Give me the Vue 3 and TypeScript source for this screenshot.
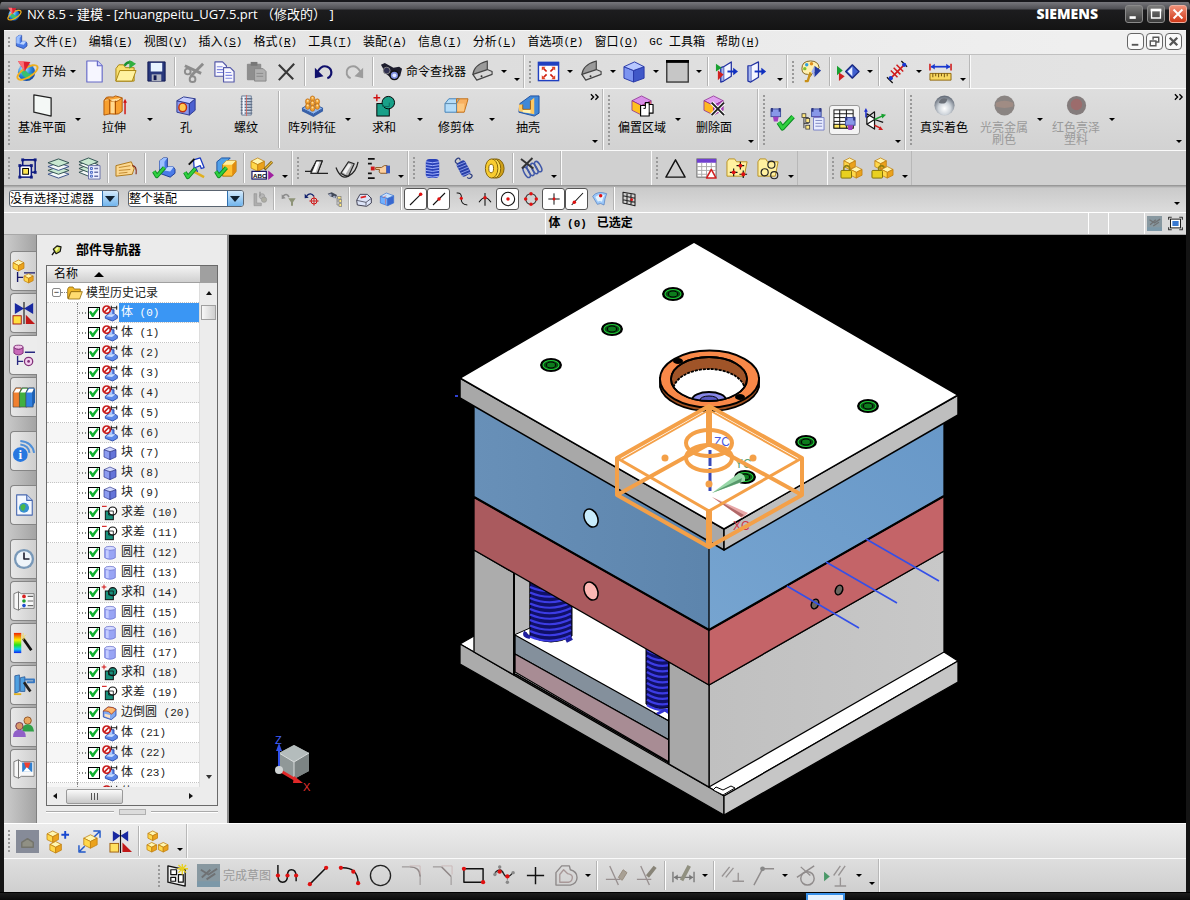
<script setup lang="ts">
import { ref } from 'vue'

type Kind = 'button' | 'sep' | 'arrow' | 'more' | 'space' | 'chevron'
interface Tool { kind: Kind; icon: string; lines: string[]; flags: string }
interface Group { big: boolean; cls: string; tools: Tool[] }

/* ---------- drawing helpers (24 x 24 grid) ---------- */
const dot = (x: number, y: number, r = 2, c = '#e01010') => `<circle cx="${x}" cy="${y}" r="${r}" fill="${c}"/>`
const p = (d: string, s = '#000', w = 1.5, f = 'none') => `<path d="${d}" stroke="${s}" stroke-width="${w}" fill="${f}" stroke-linejoin="round"/>`
const fill = (d: string, f: string) => `<path d="${d}" fill="${f}"/>`
const cube = (x: number, y: number, s: number, t: string, l: string, r: string, st: string) => {
  const h = s / 2
  return p(`M${x} ${y - s}L${x + s} ${y - h}L${x} ${y}L${x - s} ${y - h}Z`, st, 0.8, t)
    + p(`M${x - s} ${y - h}L${x} ${y}V${y + s}L${x - s} ${y + h}Z`, st, 0.8, l)
    + p(`M${x + s} ${y - h}L${x} ${y}V${y + s}L${x + s} ${y + h}Z`, st, 0.8, r)
}
const gold = (x: number, y: number, s: number) => cube(x, y, s, '#fff6b0', '#ffd84a', '#eba21c', '#c08010')
const check = (x: number, y: number) => p(`M${x} ${y}l3 5l8 -9`, '#0a8a20', 4.2) + p(`M${x} ${y}l3 5l8 -9`, '#30d040', 2.4)
const plusAt = (x: number, y: number, c: string, r = 3, w = 1.5) => p(`M${x - r} ${y}h${2 * r}M${x} ${y - r}v${2 * r}`, c, w)
const books = ['#f08030', '#40b040', '#3080e0']
const lBody = (dx: number, dy: number) =>
  `<g transform="translate(${dx} ${dy})">` + p('M4 4l4-3h4v9h6l2 3v4l-5 4l-11-4z', '#1c3c98', 1, '#4a7be8')
  + fill('M4 4l4-3h4l-3 4v9l-5-1z', '#9cc0ff') + fill('M9 14l4-4h6l-4 5z', '#bcd4ff') + '</g>'
const gun = '<rect x="12" y="1" width="10" height="8" fill="#8898e8" stroke="#4050a0"/><path d="M13 0v4M21 0v4" stroke="#303880" stroke-width="2"/>' + fill('M14 9h6l-1 5h-4z', '#a040c0')

const icons: Record<string, string> = {
  nx: '<circle cx="11" cy="13" r="9" fill="url(#globe)"/>' + fill('M5 12q3-4 6 0t6 1l-3 7q-6 0-9-8z', '#38c070')
    + '<ellipse cx="12" cy="13" rx="12" ry="5" fill="none" stroke="#f0b020" stroke-width="2" transform="rotate(-32 12 13)"/>' + fill('M2 1l13 1l-6 10z', '#e02030') + fill('M2 1l6 0l1 11z', '#f87078'),
  part: lBody(1, 1),
  new: p('M4 1h11l5 5v17h-16z', '#6468c8', 1.2, '#f6f6ff') + p('M15 1v5h5', '#6468c8', 1.2, '#d0d4ff'),
  open: p('M2 9l3-4h5l2 3h9v14h-19z', '#a88410', 1, '#f8e070') + p('M2 22l4-11h17l-4 11z', '#a88410', 1, '#fff2a0') + p('M11 6q3-5 8-3', '#1a9030', 2.5) + fill('M16 0l7 4l-7 5z', '#30b040'),
  save: p('M3 2h18v20h-18z', '#101850', 1, '#28387c') + '<rect x="6" y="3" width="12" height="9" fill="#e8f4ff"/><rect x="7" y="15" width="10" height="7" fill="#b0b4c0"/><rect x="9" y="16" width="3" height="5" fill="#101850"/>',
  cut: p('M3 6l17 8M22 4l-13 13', '#8c8c8c', 3) + '<circle cx="6" cy="12" r="3" fill="none" stroke="#8c8c8c" stroke-width="2"/><circle cx="11" cy="20" r="3" fill="none" stroke="#8c8c8c" stroke-width="2"/>',
  copy: p('M2 2h8l4 4v11h-12z', '#5458a8', 1.2, '#f8f8ff') + p('M4 7h6M4 10h8M4 13h8', '#8088e0', 1.2) + p('M11 8h7l4 4v11h-11z', '#5458a8', 1.2, '#f8f8ff') + p('M13 13h6M13 16h7M13 19h7', '#8088e0', 1.2),
  paste: '<rect x="3" y="4" width="15" height="17" rx="1" fill="#8e8e8e"/><rect x="7" y="2" width="7" height="4" fill="#777"/>' + p('M11 9h9l3 3v10h-12z', '#888', 1, '#b0b0b0') + p('M13 14h7M13 17h7', '#8a8a8a', 1),
  del: p('M4 5l15 15M20 4l-16 17', '#383838', 2.2),
  undo: p('M6 12q4-7 10-5q5 2 4 8q-1 3-4 4', '#10106c', 2.2) + fill('M3 8v11l9-2z', '#10106c'),
  redo: p('M18 12q-4-7-10-5q-5 2-4 8q1 3 4 4', '#9c9c9c', 2) + fill('M21 8v11l-9-2z', '#9c9c9c'),
  find: fill('M1 5l4-2l9 5l6-1l3 2l-2 8l-8 3l-7-6z', '#1c1c2c') + '<circle cx="7" cy="11" r="3.5" fill="#303050" stroke="#888"/><circle cx="15" cy="16" r="4.5" fill="#8090e0" stroke="#111" stroke-width="1.5"/><circle cx="15" cy="16" r="2" fill="#e0e8ff"/>',
  clip: p('M2 15q1-10 15-14v14l-11 5z', '#444', 1.2, '#9a9a9a') + p('M2 15l4 6l16-6v-3l-5-2z', '#444', 1.2, '#d8d8d8') + dot(11, 17, 1, '#333'),
  fit: '<rect x="1.5" y="2.5" width="21" height="19" fill="#fff" stroke="#2040c0" stroke-width="1.5"/><rect x="1" y="2" width="22" height="4" fill="#2040c0"/>' + p('M10 12l-3-3M14 12l3-3M10 15l-3 3M14 15l3 3', '#d02010', 1.8) + fill('M5 7h4l-4 4zM19 7h-4l4 4zM5 20h4l-4-4zM19 20h-4l4-4z', '#e04020'),
  shade: p('M1 7l10 4v12l-10-4z', '#2838a8', 1, '#7c94f0') + p('M11 11l11-4v12l-11 4z', '#2838a8', 1, '#4058c8') + p('M1 7l11-5l10 5l-11 4z', '#2838a8', 1, '#b8c8ff'),
  blank: '<rect x="0.8" y="1" width="22.4" height="22" fill="#c6c6c6" stroke="#333" stroke-width="1.4"/><rect x="0" y="0" width="24" height="3" fill="#000"/>',
  wcsA: p('M9 7l8-5v15l-8 5z', '#2030a0', 1.3, '#f4f6ff') + p('M9 7l-3 1v15l3-1', '#2030a0', 1.3, '#a8b8f0') + fill('M1 4l6 4l-6 4z', '#18a030') + fill('M3 11l6 4l-6 6z', '#d02020') + p('M13 12h8', '#1030c0', 2) + fill('M19 8l5 4l-5 4z', '#1030c0'),
  wcsB: p('M5 6l8-4v16l-8 5z', '#2030a0', 1.3, '#f4f6ff') + p('M5 6l-3 0v16l3 1', '#2030a0', 1.3, '#a8b8f0') + p('M9 12h9', '#1030c0', 2) + fill('M16 8l5 4l-5 4z', '#1030c0'),
  palette: p('M2 9q0-8 9-8q8 0 9 7l-4 5q-4 0-5 4l-3-2q-6 0-6-6z', '#806018', 1, '#fff0b0') + dot(7, 5, 1.8, '#30a0e0') + dot(12, 4, 1.8, '#e09020') + dot(5, 9, 1.8, '#80c030') + p('M11 13l-3 9h-3', '#c89018', 2.5) + fill('M15 6l7 5l-7 7z', '#2038a0') + fill('M15 6v12l-3-6z', '#a0b0f0'),
  play: fill('M0 6l6 5l-6 5z', '#18a030') + fill('M2 13l6 4l-6 5z', '#d02020') + p('M9 12l7-7l7 7l-7 7z', '#182880', 1.3, '#4060d0') + fill('M16 7v10l-5-5z', '#e8eeff'),
  snap: p('M4 20l16-16', '#d01818', 1.6) + p('M5 11l7 7M8 8l7 7M11 5l7 7', '#d01818', 1.5) + p('M1 18l6 6M16 1l6 6', '#111', 1.3) + dot(5, 19, 2.2, '#1838d0') + dot(19, 5, 2.2, '#1838d0'),
  measure: p('M1 4v7M23 4v7', '#d01818', 1.6) + p('M2 7h20', '#1838d0', 1.8) + fill('M2 7l4-3v6zM22 7l-4-3v6z', '#1838d0') + p('M1 14h22v7h-22z', '#906810', 1, '#f8d860') + p('M4 14v4M7 14v3M10 14v4M13 14v3M16 14v4M19 14v3', '#705010', 1),
  plane: p('M3 1l18 3v19l-18-4z', '#222', 1.3, '#f4f8f6'),
  extrude: p('M1 7q2-5 6-4t6-1l7 2v14q-4 4-8 3t-11 1z', '#b05808', 1, '#f8a030') + p('M1 7q3-4 7 0t12-3', '#b05808', 1, '#ffe0a0') + p('M7 6v15M13 7v14', '#a04800', 1) + fill('M8 8h4v12h-4z', '#ffd890') + p('M23 21v-13', '#d01010', 1.5) + fill('M21 9h4l-2-4z', '#d01010'),
  hole: p('M2 7l13 3v12l-13-3z', '#2c3890', 1, '#8c98ec') + p('M15 10l6-5v12l-6 5z', '#2c3890', 1, '#4c60d0') + p('M2 7l7-4l12 2l-6 5z', '#2c3890', 1, '#c8d0ff') + '<ellipse cx="8" cy="14" rx="4" ry="4.5" fill="#ffc850" stroke="#c03010" stroke-width="1.5"/>',
  thread: p('M7 2h10v20h-10z', '#708098', 1, '#ccd8e8') + p('M6 5h12M6 8h12M6 11h12M6 14h12M6 17h12M6 20h12', '#607088', 1.4) + p('M12 1v22', '#e06050', 0.8) + fill('M8 3h2v18h-2z', '#f4f8ff'),
  pattern: p('M1 15l10-6l12 6l-10 6z', '#2c58a0', 1, '#90b8f0') + fill('M1 15l12 6v3l-12-6zM23 15l-10 6v3l10-6z', '#3860a8') + [[12, 5], [7, 8], [17, 8], [12, 10], [7, 13], [17, 13], [12, 15]].map(([x, y]) => `<ellipse cx="${x}" cy="${y}" rx="2.4" ry="3" fill="#f0a030" stroke="#b06010" stroke-width="0.6"/><circle cx="${x}" cy="${y - 1}" r="1" fill="#ffe0a0"/>`).join(''),
  unite: '<rect x="4" y="10" width="13" height="13" fill="#18a088" stroke="#000"/><circle cx="16" cy="9" r="6.5" fill="#18a088" stroke="#000"/>' + p('M10 10v3h7v-4', '#0c6c5c', 1) + plusAt(4, 4, '#d01010', 3.5),
  trim: p('M0 10l4-5h10v14h-14z', '#4080b8', 1, '#b4dcf8') + p('M12 5h12l-1 4l-3 10h-8z', '#c07018', 1, '#f8b060') + p('M0 10h12l3-5M12 10v9', '#5a88a8', 1) + fill('M13 10h7v8h-7z', '#fcc880'),
  shell: p('M3 10l11-8h9v18l-5 3l-16-4z', '#2050a0', 1, '#4088d8') + fill('M2 11h4v5h8v-9l4-3v17l-16-3z', '#ffc860') + fill('M6 16l8 0v4l-8-1z', '#fff0b0') + p('M6 11v5h8v-9', '#a06010', 1),
  offset: cube(11, 12, 10, '#d890e8', '#ffc020', '#f07858', '#8c2890') + p('M10 12h5v-3h4v2h4v9h-4v3h-9z', '#000', 1.2, '#fff') + p('M15 12v3h-2M19 11v9', '#000', 1),
  delface: cube(11, 12, 10, '#e0a0f0', '#ffb820', '#b048c0', '#8c2890') + p('M9 9l13 13M22 9l-13 13', '#fff', 4) + p('M9 9l13 13M22 9l-13 13', '#222', 2),
  pvOk: `<g transform="translate(-12 0)">${gun}</g>` + p('M8 15l4 6l11-12', '#0a8a20', 5) + p('M8 15l4 6l11-12', '#30d040', 3),
  pvTree: '<g transform="translate(-2 0)">' + gun + '</g>' + p('M2 7v14M2 10h5M2 16h5', '#333', 1) + '<rect x="0" y="6" width="4" height="4" fill="#ffe880" stroke="#333" stroke-width="0.8"/><rect x="4" y="11" width="4" height="4" fill="#ffe880" stroke="#333" stroke-width="0.8"/><rect x="4" y="18" width="4" height="4" fill="#ffe880" stroke="#333" stroke-width="0.8"/>' + p('M12 10h11v13h-11z', '#7880c8', 1, '#e8ecff') + p('M14 13h7M14 16h7M14 19h7', '#8088c0', 1),
  pvGrid: '<rect x="1" y="2" width="20" height="19" fill="#fff" stroke="#111"/><rect x="1" y="17" width="20" height="4" fill="#ffe860" stroke="#111"/>' + p('M1 6h20M1 10h20M1 14h20M7 2v19M14 2v19', '#111', 1) + `<g transform="translate(1 9)">${gun}</g>`,
  pvAxes: p('M3 6v11l8 5v-11z', '#111', 1.3, '#fff') + p('M3 17l8-5l9 3M11 11v-7l-8 6', '#111', 1.2) + p('M2 10v-8', '#2030d0', 1.5) + fill('M0 4h4l-2-4z', '#2030d0') + p('M11 12l9-4', '#18a030', 1.5) + fill('M18 6l5 1l-4 4z', '#18a030') + p('M11 18l6 3', '#d02020', 1.5) + fill('M15 23l5 0l-3-4z', '#d02020'),
  silver: '<circle cx="12" cy="12" r="10.5" fill="url(#silver)"/>' + fill('M6 9q2-6 9-4q-1 5-4 5t-5-1z', '#6b7078'),
  metal: '<circle cx="12" cy="12" r="10.5" fill="#8a8482"/>' + fill('M3 9q9-4 18 0v4q-9 3-18 0z', '#a08c84'),
  plastic: '<circle cx="12" cy="12" r="10" fill="#847c7c"/><circle cx="12" cy="11" r="6" fill="#9c6c6c"/>',

  sel: p('M7 3h13v13h-13z', '#101c80', 1.6) + '<rect x="4" y="9" width="12" height="12" fill="#fff" stroke="#101c80" stroke-width="1.6"/><rect x="7" y="12" width="6" height="6" fill="#ffe850" stroke="#000"/>' + [[4, 9], [16, 9], [4, 21], [16, 21], [7, 3], [20, 3], [20, 16]].map(([x, y]) => `<rect x="${x - 1.5}" y="${y - 1.5}" width="3" height="3" fill="#101c80"/>`).join(''),
  layers: [18, 14, 10, 6].map((y, i) => p(`M1 ${y}l11-4l11 4l-11 4z`, i % 2 ? '#305050' : '#385088', 1, i % 2 ? '#c8e8d0' : '#f4f8f8')).join(''),
  layset: [16, 12, 8, 5].map((y, i) => p(`M1 ${y}l10-4l10 4l-10 4z`, '#305050', 1, i % 2 ? '#c8e8d0' : '#f4f8f8')).join('') + p('M11 9h12v14h-12z', '#6870a8', 1, '#eef0ff') + p('M17 12h4M17 16h4M17 20h4', '#6870a8') + p('M13 11h2v2h-2zM13 15h2v2h-2zM13 19h2v2h-2z', '#4060c0', 1),
  tag: p('M1 9l16-4l3 7l-2 6l-17 2z', '#b07818', 1, '#fcd890') + p('M4 11l12-2M4 14l12-1M4 17l9-1', '#c08830', 1) + p('M18 9q5 0 4 9', '#802010', 1.2),
  cpyA: lBody(4, 0) + check(2, 15),
  cpyB: p('M11 3l7-2l4 10l-3 1l-1-3l-5 2l2 4l-3 1z', '#1838c0', 1.3, '#fff') + p('M6 8l6-6', '#111', 2) + p('M11 15l11 6', '#e0b020', 2.5) + check(2, 16),
  cpyC: p('M3 5l5-4h9l-4 4v12h-10z', '#1c50a0', 1, '#50a0e8') + p('M9 8l4-4h10v11l-4 5h-10z', '#b07810', 1, '#ffc030') + fill('M9 8l4-4h10l-4 4z', '#fff0a0') + fill('M19 8l4-4v11l-4 5z', '#e08c10') + check(2, 15),
  abc: gold(7, 8, 7) + p('M14 13l8-8', '#806010', 3) + p('M15 12l7-7', '#f0c040', 1.2) + '<rect x="1" y="15" width="15" height="8" fill="#fff" stroke="#101060" stroke-width="1.2"/><text x="2" y="21.5" font-family="Liberation Sans" font-size="6.5" font-weight="700">ABC</text>' + fill('M18 14l6 5l-6 5z', '#a020a0'),
  chA: p('M0 15h6l6-11h6l-5 13h-7M13 17h11', '#222', 1.3) + p('M6 17l6-13h6l-5 13z', '#222', 1.2, '#c8c8c8') + fill('M12 5h3l-4 11h-3z', '#fff'),
  chB: p('M0 11q5 13 13 9t10-15', '#222', 1.3) + p('M5 17l8-12l6 2l-6 13q-4 0-8-3z', '#222', 1.2, '#b0b0b0') + fill('M13 7l3 1l-6 10l-3-2z', '#f0f0f0'),
  hand: p('M1 2h7M1 7h4M1 17h4M1 22h7', '#111', 1.8) + '<rect x="4" y="10" width="4" height="4" fill="#d01818"/>' + p('M9 11h6l3-2h3v8h-7q-2-1-1-4h-4z', '#8c5820', 1, '#fcd0a0') + '<rect x="20" y="9" width="4" height="8" fill="#3858c0"/>',
  spring: '<rect x="5" y="2" width="14" height="20" rx="4" fill="#2840b8"/>' + [5, 8, 11, 14, 17, 20].map(y => p(`M5 ${y}q7 2 14 0`, '#a8b8ff', 1)).join(''),
  springd: '<g transform="rotate(-28 12 12)"><rect x="7" y="4" width="10" height="16" rx="3" fill="#2840a8"/>' + [6, 9, 12, 15, 18].map(y => p(`M7 ${y}l10 1`, '#98a8f0', 0.8)).join('') + p('M9 5q-3-4 1-5t3 3M15 20q3 3 0 4t-4-2', '#304080', 1.3) + '</g>',
  coil: '<ellipse cx="14" cy="12" rx="8" ry="10" fill="#d0a018" stroke="#806008"/><ellipse cx="11.5" cy="12" rx="7" ry="10" fill="#ffe050" stroke="#806008"/><ellipse cx="9" cy="12" rx="6.5" ry="10" fill="#f8cc30" stroke="#806008"/><ellipse cx="8.5" cy="12" rx="2.5" ry="4.5" fill="#fff" stroke="#806008"/>',
  springx: [0, 1, 2, 3].map(i => `<ellipse cx="${7 + i * 4}" cy="${16 - i * 2}" rx="2.5" ry="6" fill="none" stroke="#4058a8" stroke-width="1.6" transform="rotate(-30 ${7 + i * 4} ${16 - i * 2})"/>`).join('') + p('M1 2l13 10M13 1l-11 11', '#333', 2),
  tri: p('M12 3l10 18h-20z', '#111', 1.5),
  tabtri: '<rect x="2" y="2" width="20" height="19" fill="#fff" stroke="#666"/><rect x="2" y="2" width="20" height="4" fill="#7040d0"/>' + p('M2 10h20M2 14h20M2 18h20M7 6v15M12 6v15M17 6v15', '#aaa', 1) + p('M17 13l5 9h-10z', '#d02020', 1.6, '#fff'),
  foldpts: p('M1 5l2-3h6l2 3h11l-3 15h-18z', '#b89020', 1, '#fff0a0') + plusAt(8, 16, '#111', 4, 1.2) + plusAt(15, 9, '#111', 4, 1.2) + plusAt(18, 18, '#111', 4, 1.2) + dot(8, 16) + dot(15, 9) + dot(18, 18),
  foldcirc: p('M1 5l2-3h6l2 3h11l-3 15h-18z', '#b89020', 1, '#fff0a0') + [[8, 16], [15, 8], [18, 19]].map(([x, y]) => `<circle cx="${x}" cy="${y}" r="3.7" fill="none" stroke="#222" stroke-width="1.2"/>`).join(''),
  lockA: gold(10, 7, 6) + gold(17, 16, 6) + '<path d="M4 14v-3q3-4 6 0v3" fill="none" stroke="#908010" stroke-width="1.6"/><rect x="1" y="14" width="11" height="8" rx="1" fill="#e8d020" stroke="#807008"/>',
  lockB: gold(10, 7, 6) + gold(17, 16, 6) + '<path d="M8 14v-3q3-4 6 0" fill="none" stroke="#908010" stroke-width="1.6"/><rect x="1" y="14" width="11" height="8" rx="1" fill="#e8d020" stroke="#807008"/>',

  sBulb: '<g opacity="0.65">' + p('M3 4h4v14h7v4h-11z', '#777', 1, '#999') + '<circle cx="15" cy="8" r="4" fill="#aaa" stroke="#777"/><circle cx="18" cy="13" r="4" fill="#9a9a8a" stroke="#777"/>' + p('M12 1v7', '#777', 2) + '</g>',
  sFil: p('M3 8q5-6 9 1', '#8c8c8c', 2.5) + fill('M1 5v7l6-1z', '#8c8c8c') + fill('M11 11h11l-4 6v5h-3v-5z', '#8e9478'),
  sUndo: p('M4 7q6-6 11 1', '#10206c', 2) + fill('M1 4v7l6-1z', '#10206c') + '<circle cx="15" cy="15" r="4.5" fill="none" stroke="#d01010" stroke-width="1.5"/>' + plusAt(15, 15, '#d01010', 7, 1.3),
  sTree: fill('M1 4l6-2l8 4l-2 5l-8-3z', '#404858') + dot(5, 6, 2, '#a0a8c0') + dot(11, 9, 2, '#a0a8c0') + p('M15 10v11h4M15 15h4', '#777', 1) + '<rect x="16" y="8" width="5" height="4" fill="#ffe880" stroke="#777"/><rect x="18" y="13" width="4" height="4" fill="#ffe880" stroke="#777"/><rect x="18" y="19" width="4" height="4" fill="#ffe880" stroke="#777"/>',
  sBox: p('M1 14l5-9h11l6 6v7l-7 5l-14-2z', '#445', 1.5, '#dce4f8') + p('M1 14l14 3l8-6M15 17v5', '#445', 1.2) + p('M7 10l8-2', '#e02020', 2.5),
  sCube: p('M2 8l11 3v11l-11-4z', '#3870d0', 1, '#70b0ff') + p('M13 11l9-4v11l-9 4z', '#3870d0', 1, '#3868d0') + p('M2 8l9-5l11 4l-9 4z', '#3870d0', 1, '#c8e4ff') + p('M10 12v8M6 10l5-3', '#e06060', 1),
  sEnd: p('M3 21l16-16', '#111', 1.6) + dot(19, 5, 2.6),
  sMid: p('M3 21l18-18', '#111', 1.6) + dot(12, 12, 2.6),
  sCurve: p('M4 3q8-1 7 8t9 10', '#111', 1.6) + dot(11, 11, 2.4),
  sCross: p('M3 17q9-14 18 0M12 3v19', '#111', 1.6) + dot(12, 10, 2.6),
  sCirc: '<circle cx="12" cy="12" r="10" fill="none" stroke="#111" stroke-width="1.6"/>' + dot(12, 12, 2.6),
  sQuad: '<circle cx="12" cy="12" r="8" fill="none" stroke="#333" stroke-width="1.6"/>' + dot(12, 4, 2.6) + dot(12, 20, 2.6) + dot(4, 12, 2.6) + dot(20, 12, 2.6),
  sPlus: plusAt(12, 12, '#111', 8.5) + dot(12, 12, 2.2),
  sOn: p('M4 21l17-18', '#111', 1.6) + dot(8, 17, 2.6),
  sSurf: p('M1 8q7-9 21-4q-3 7-4 17q-5-4-10-1z', '#4878c0', 1, '#9cc8f8') + fill('M5 9q6-5 14-3q-3 4-4 10q-4-2-6 0z', '#e4f4ff') + dot(13, 7, 2.6),
  sGrid: p('M3 2l18 3v17l-18-4zM3 7l18 4M3 13l18 4M9 3v17M15 4v17', '#222', 1.6) + dot(16, 13, 2),
  dim: '<rect x="0" y="0" width="24" height="24" fill="#8898a0"/>' + p('M4 6l8 5l9-6M5 14l9-8M10 16l9-6', '#6f7274', 2) + fill('M0 18h24v6h-24z', '#7c98a8'),
  dimAsm: '<rect x="0" y="0" width="24" height="24" fill="#868b98"/>' + p('M6 18v-5l6-4l6 4v5z', '#74746c', 1.5, '#909084'),
  screen: '<rect x="4" y="5" width="16" height="14" fill="#fff" stroke="#111" stroke-width="1.5"/><rect x="7" y="8" width="10" height="8" fill="#3878d0"/>' + p('M1 6v-4h5M18 2h5v4M23 18v4h-5M6 22h-5v-4', '#333', 1.8),

  tAsm: gold(6, 6, 6) + p('M5 13v11M5 19h6M12 14h12', '#181868', 1.5) + gold(17, 20, 5),
  tCon: fill('M2 1l10 6l-10 6zM22 1l-10 6l10 6z', '#1828a0') + p('M12 0v24', '#111', 1.2) + '<rect x="0" y="15" width="9" height="9" fill="#ffe040" stroke="#a01010"/>' + fill('M14 14v10h10z', '#c01818'),
  tPart: '<ellipse cx="6" cy="3.5" rx="5" ry="2.2" fill="#f0c0e8" stroke="#803078"/>' + p('M1 4v6q5 4 10 0v-6q-5 4-10 0z', '#803078', 1, '#c868b8') + p('M5 13v10M5 19h6M13 9h11', '#282880', 1.5) + '<circle cx="17" cy="19" r="4.5" fill="#f4d0f0" stroke="#803078" stroke-width="1.4"/><circle cx="17" cy="19" r="1.5" fill="#803078"/>',
  tBooks: books.map((c, i) => p(`M${i * 7} 7l3-5h6l-1 5v16h-8z`, '#444', 0.7, c) + fill(`M${i * 7 + 1} 7l2.5-4h5l-1.5 4z`, '#fff')).join('') + fill('M21 7l3-5v16l-3 5z', '#2060b0'),
  tInfo: '<circle cx="8" cy="16" r="8" fill="#2878e0"/>' + '<text x="8" y="21" font-family="Liberation Serif" font-size="14" font-weight="700" fill="#fff" text-anchor="middle">i</text>' + p('M8 5q9 1 10 9M8 1q13 1 15 13', '#5090d8', 2.2),
  tWeb: p('M4 1h11l6 6v16h-17z', '#4868b0', 1.2, '#f4f8ff') + p('M15 1v6h6', '#4868b0', 1.2, '#c8d8f8') + '<circle cx="12" cy="15" r="5.5" fill="#3890d0"/>' + fill('M8 13q4-4 6 0l-2 5q-4 1-4-5z', '#48b848'),
  tClock: '<circle cx="12" cy="12" r="11" fill="#7898b8"/><circle cx="12" cy="12" r="8.5" fill="#eef4fa"/>' + p('M12 5v7h6', '#223', 1.8),
  tRoles: p('M1 4l5-2v20l-5-2zM6 2l3 2h14v16h-14l-3 2z', '#777', 1, '#f8f8f8') + dot(12, 7, 2, '#d82020') + dot(12, 12, 2, '#20a030') + dot(12, 17, 2, '#2050d0') + p('M16 7h6M16 12h6M16 17h6', '#666', 1.2),
  tRain: '<rect x="1" y="1" width="8" height="22" fill="url(#rainbow)"/>' + p('M11 7l9 13', '#111', 3) + p('M9 3l5 5M14 3l-5 5M11 1v8', '#f0d860', 1),
  tMold: p('M2 2l5-1v18l-5 2zM8 4l5-1v16h-5z', '#205090', 0.8, '#50a0e0') + p('M12 6h11v3h-8', '#3878c0', 2) + p('M12 9l7 10', '#222', 3) + p('M1 22h8', '#e0b020', 2),
  tUsers: '<circle cx="16" cy="5" r="4" fill="#e8a860" stroke="#905020"/>' + fill('M10 17q0-8 6-8t7 8z', '#30a048') + '<circle cx="7" cy="11" r="4" fill="#d89868" stroke="#703050"/>' + fill('M0 23q0-8 7-8t7 8z', '#9060c8'),
  tSys: p('M1 4l5-2v20l-5-2zM6 2l3 2h14v16h-14l-3 2z', '#777', 1, '#f8f8f8') + '<rect x="10" y="5" width="11" height="10" fill="#3080d0"/>' + fill('M12 5h7l-2 6h-3z', '#f04030') + fill('M11 15l4-5l5 5z', '#fff'),

  body: p('M5 17l5-4v-6h8v6l5 3v4l-7 4l-11-4z', '#2444a8', 1.3, '#5c88e8') + fill('M6 17l5-3h9l-5 4z', '#c8dcff') + fill('M11 8h4v6h-4z', '#a8c8ff') + p('M13 4h10M14 1v6M22 1v6', '#222', 1.6) + '<circle cx="7" cy="7" r="5.5" fill="#fff" stroke="#c81c1c" stroke-width="2.6"/>' + p('M3 11l8-8', '#c81c1c', 2.6),
  block: p('M3 7l9 3v12l-9-4z', '#2c3488', 1, '#8c9cf0') + p('M12 10l9-3v11l-9 4z', '#2c3488', 1, '#6474d8') + p('M3 7l9-4l9 4l-9 3z', '#2c3488', 1, '#d0d8ff'),
  cyl: p('M4 5v14q8 5 16 0v-14z', '#6068c8', 1, '#98a4f4') + '<ellipse cx="12" cy="5" rx="8" ry="3" fill="#d4daff" stroke="#6068c8"/>' + fill('M6 8h4v12l-4-1z', '#c4ccff'),
  sub: '<rect x="5" y="9" width="12" height="13" fill="#18907c" stroke="#111" stroke-width="1.5"/><circle cx="16" cy="9" r="6" fill="#fff" stroke="#111" stroke-width="1.8"/>' + p('M10 9h7v6h-7z', '#111', 1.2) + p('M0 2h7', '#d01010', 1.6),
  uni: '<rect x="5" y="9" width="12" height="13" fill="#18907c" stroke="#111" stroke-width="1.5"/><circle cx="16" cy="10" r="6" fill="#18907c" stroke="#111" stroke-width="1.8"/>' + p('M10 9h7v6h-7z', '#111', 1.2) + plusAt(3, 3, '#d01010', 3.5),
  blend: p('M2 9l7-6q8 0 12 3v10l-7 6l-12-4z', '#2444a8', 1.2, '#80a8f0') + p('M2 9q9-1 12 5l7-7q-3-4-12-4z', '#b04010', 1.2, '#ffb870') + fill('M4 13l8 2v5l-8-3z', '#ffe0c0'),
  folder: p('M1 6l2-3h6l2 3h9v4h-14l-4 10h-1z', '#906808', 1.2, '#f0b828') + p('M2 21l4-11h17l-4 11z', '#906808', 1.2, '#ffdc70'),
  pin: p('M2 22l6-8', '#111', 3) + p('M5 9l8-7l9 2l-2 10l-9 5z', '#111', 2.5, '#c8d040') + fill('M9 9l5-4l3 1l-6 8z', '#f8ffb0'),

  add: gold(6, 7, 6) + gold(9, 18, 6) + plusAt(19, 5, '#1848d0', 4, 2),
  move: gold(13, 12, 7) + p('M1 16v7h7M2 22l5-5M23 8v-7h-7M22 2l-5 5', '#2058c8', 1.5),
  mirror: fill('M4 1l8 5l-8 6zM20 1l-8 5l8 6z', '#1828a0') + p('M12 0v24', '#111', 1.2) + '<rect x="1" y="14" width="9" height="9" fill="#ffe060" stroke="#a06010"/>' + fill('M14 13v10h10z', '#c01818'),
  pat: gold(7, 6, 5) + gold(6, 18, 5) + gold(18, 18, 5),
  sk: p('M2 2l18 4v17l-18-4z', '#111', 1.4, '#eee') + p('M5 6h6v5h-6zM5 14h5v4h-5zM13 11h5v8h-5z', '#111', 1.3, '#fff') + p('M17 0v11M12 5h11M13 1l8 8M21 1l-8 8', '#e8d020', 1.4),
  profile: p('M2 1v11q0 7 5 7q5 0 5-7q0-6 4-6q5 0 5 7v5', '#111', 1.5) + dot(2, 12, 2.2) + dot(12, 12, 2.2) + dot(21, 12, 2.2),
  line: p('M3 21l17-17', '#111', 1.5) + dot(3, 21, 2.2) + dot(20, 4, 2.2),
  arc: p('M3 4q18-1 18 16', '#111', 1.5) + dot(3, 4, 2.2) + dot(16, 8, 2.2) + dot(21, 20, 2.2),
  circle: '<circle cx="12" cy="12" r="10.5" fill="none" stroke="#222" stroke-width="1.4"/>',
  fillet: p('M2 3h8M21 12v10', '#a09c9c', 1.2) + p('M10 3q11 0 11 10', '#908888', 1.5) + p('M10 2h11v9', '#c8b0b0', 0.8),
  chamfer: p('M2 3h9M21 13v9', '#a09c9c', 1.2) + p('M11 3l10 10', '#908888', 1.5) + p('M11 2h11v9', '#c8b0b0', 0.8),
  rect: p('M2 5h20v14h-20z', '#111', 1.5) + dot(2, 5, 2.2) + dot(22, 19, 2.2),
  spline: p('M2 9q6-6 9 1t10-1', '#222', 1.4) + p('M7 2v6l-5 2M15 17l0-4', '#888', 1) + dot(7, 3, 1.8, '#888') + dot(2, 11, 1.8, '#888') + dot(21, 9, 1.8, '#888') + dot(15, 19, 1.8, '#888') + dot(7, 8, 2.2) + dot(15, 13, 2.2),
  plus: plusAt(12, 12, '#111', 9),
  offc: p('M1 22v-13l6-7h8l1 4q7 2 7 8t-7 8z', '#8c8888', 1.4) + p('M5 19v-8l4-5l4 4q6 1 5 5t-4 4z', '#a89898', 1.4),
  trimA: p('M2 16h15M6 2l9 20', '#989090', 1.4) + p('M15 14l5-8l4 3l-5 8z', '#988c80', 1, '#a8a094'),
  trimB: p('M2 16h15M6 2l9 20', '#989090', 1.4) + p('M13 13l8-10', '#888478', 4),
  dimn: p('M1 8v11M23 8v11M2 14h20', '#777', 1.4) + fill('M2 14l4-3v6zM22 14l-4-3v6z', '#777') + p('M10 17l8-15', '#909080', 4),
  conA: p('M1 13l8-10M5 14l8-10M12 18h12M18 9v9', '#989494', 1.4),
  conB: p('M2 22l9-17h12', '#908c8c', 1.5) + dot(11, 5, 2.5, '#888'),
  tang: '<circle cx="13" cy="15" r="7" fill="none" stroke="#908c8c" stroke-width="1.5"/>' + p('M2 14l18-12', '#908c8c', 1.5) + p('M6 3l10 9', '#908c8c', 1.3),
  auto: fill('M-2 8l6 5l-6 5z', '#4a9868') + p('M8 12l7-10M13 12l7-10M9 23h12M15 14v9', '#989494', 1.4),
}

/* "|" separator, "v" drop arrow, "+" overflow arrow, "_" spacer, ">>" chevron,
   "icon=label/second line", "!" greyed out, "*" pressed */
const parse = (spec: string): Tool[] => spec.split(' ').map((t) => {
  const kinds: Record<string, Kind> = { '|': 'sep', v: 'arrow', '+': 'more', _: 'space', '>>': 'chevron' }
  if (kinds[t]) return { kind: kinds[t], icon: '', lines: [], flags: '' }
  const flags = (t.includes('!') ? 'off ' : '') + (t.includes('*') ? 'pressed' : '')
  const [icon, label] = t.replace(/[!*]/g, '').split('=')
  return { kind: 'button', icon, lines: label ? label.split('/') : [], flags }
})
const g = (spec: string, cls = '', big = false): Group => ({ big, cls, tools: parse(spec) })

const topBars: { cls: string; groups: Group[] }[] = [
  { cls: 'row-a', groups: [
    g('nx=开始 v new open save | cut copy paste del | undo redo | find=命令查找器 clip v +'),
    g('fit v clip v shade v blank v | wcsA wcsB +'),
    g('palette | play v | snap v measure +'),
  ] },
  { cls: 'row-b', groups: [
    g('plane=基准平面 v extrude=拉伸 v hole=孔 thread=螺纹 | pattern=阵列特征 v unite=求和 v trim=修剪体 v shell=抽壳 _ >>', 'wide', true),
    g('offset=偏置区域 v delface=删除面 +', '', true),
    g('pvOk pvTree pvGrid* pvAxes +', '', false),
    g('silver=真实着色 metal=光亮金属/刷色! v plastic=红色亮泽/塑料! v _ >>', 'rest', true),
  ] },
  { cls: 'row-c', groups: [
    g('sel layers layset | tag | cpyA cpyB cpyC | abc +'),
    g('chA chB hand +'),
    g('spring springd coil | springx +'),
    g('tri tabtri foldpts foldcirc +', 'far'),
    g('lockA lockB +', 'near'),
  ] },
]
const bottomBars: { cls: string; groups: Group[] }[] = [
  { cls: 'row-d', groups: [g('dimAsm add move mirror | pat +')] },
  { cls: 'row-e', groups: [g('sk dim=完成草图! profile line arc circle fillet chamfer rect spline plus offc v | trimA trimB | dimn v | conA conB v tang auto v +')] },
]
const snaps = parse('sBulb | sFil sUndo sTree | sBox sCube | sEnd* sMid* sCurve sCross sCirc* sQuad sPlus* sOn* sSurf | sGrid')

const menus: [string, string][] = [
  ['文件', 'F'], ['编辑', 'E'], ['视图', 'V'], ['插入', 'S'], ['格式', 'R'], ['工具', 'T'], ['装配', 'A'],
  ['信息', 'I'], ['分析', 'L'], ['首选项', 'P'], ['窗口', 'O'],
]
const tabs = ['tAsm', 'tCon', 'tPart', 'tBooks', 'tInfo', 'tWeb', 'tClock', 'tRoles', 'tRain', 'tMold', 'tUsers', 'tSys']
const tabNames = ['装配导航器', '约束导航器', '部件导航器', '重用库', '信息', '网页', '历史记录', '系统材料', '颜色', '模具', '角色', '场景']

const kindOf = (n: number): [string, string] => {
  if (n <= 6 || n > 20) return ['body', '体']
  if (n <= 9) return ['block', '块']
  if ([10, 11, 19].includes(n)) return ['sub', '求差']
  if ([14, 18].includes(n)) return ['uni', '求和']
  if (n === 20) return ['blend', '边倒圆']
  return ['cyl', '圆柱']
}
const features = ref(Array.from({ length: 25 }, (_, n) => ({ n, icon: kindOf(n)[0], name: kindOf(n)[1], on: true })))
const selected = ref(0)
const activeTab = ref(2)
const filter = ref('没有选择过滤器')
const scope = ref('整个装配')

const screws = [[673, 294], [612, 329], [551, 365], [868, 406], [806, 442], [745, 477]]
const coilsA = Array.from({ length: 12 }, (_, i) => 576 + i * 5.5)
const coilsB = Array.from({ length: 11 }, (_, i) => 650 + i * 5.5)
</script>

<template>
  <div class="window">
    <svg class="defs" aria-hidden="true">
      <defs>
        <radialGradient id="globe" cx=".35" cy=".3" r=".8"><stop offset="0" stop-color="#c8f0ff" /><stop offset=".5" stop-color="#2888e0" /><stop offset="1" stop-color="#103890" /></radialGradient>
        <radialGradient id="silver" cx=".5" cy=".65" r=".6"><stop offset="0" stop-color="#ffffff" /><stop offset=".5" stop-color="#d0d6dc" /><stop offset="1" stop-color="#68707c" /></radialGradient>
        <linearGradient id="rainbow" x1="0" y1="0" x2="0" y2="1"><stop offset="0" stop-color="#f02000" /><stop offset=".35" stop-color="#f8f000" /><stop offset=".6" stop-color="#20e020" /><stop offset=".8" stop-color="#10d0f0" /><stop offset="1" stop-color="#1020f0" /></linearGradient>
      </defs>
    </svg>

    <header class="title">
      <svg class="ic-title" viewBox="0 0 24 24" aria-hidden="true" v-html="icons.nx" />
      <h1>NX 8.5 - 建模 - [zhuangpeitu_UG7.5.prt （修改的） ]</h1>
      <span class="brand">SIEMENS</span>
      <div class="win-btns">
        <button type="button" class="wb" aria-label="最小化"><svg viewBox="0 0 18 18"><path d="M4 13h7" stroke="#fff" stroke-width="3" /></svg></button>
        <button type="button" class="wb" aria-label="最大化"><svg viewBox="0 0 18 18"><path d="M4 4.5h10v9h-10z" fill="none" stroke="#fff" stroke-width="1.5" /><path d="M3 4.5h12" stroke="#fff" stroke-width="3" /></svg></button>
        <button type="button" class="wb close" aria-label="关闭"><svg viewBox="0 0 18 18"><path d="M4 4l10 10M14 4l-10 10" stroke="#fff" stroke-width="2.2" /></svg></button>
      </div>
    </header>

    <div class="frame">
      <nav class="menubar">
        <i class="grip" />
        <svg class="ic-menu" viewBox="0 0 24 24" aria-hidden="true" v-html="icons.part" />
        <button v-for="m in menus" :key="m[0]" type="button">{{ m[0] }}<span class="lat">(<u>{{ m[1] }}</u>)</span></button>
        <button type="button"><span class="lat">GC&nbsp;</span>工具箱</button>
        <button type="button">帮助<span class="lat">(<u>H</u>)</span></button>
        <div class="doc-btns">
          <button type="button" aria-label="最小化文档"><svg viewBox="0 0 16 16"><path d="M4 11.5h7" stroke="#555" stroke-width="2" /></svg></button>
          <button type="button" aria-label="还原文档"><svg viewBox="0 0 16 16"><path d="M6.5 6v-2.5h6v5h-2.500M3.5 7.5h6v5h-6z" fill="none" stroke="#555" stroke-width="1.5" /></svg></button>
          <button type="button" aria-label="关闭文档"><svg viewBox="0 0 16 16"><path d="M4 4l8 8M12 4l-8 8" stroke="#555" stroke-width="2.5" /></svg></button>
        </div>
      </nav>

      <div v-for="bar in topBars" :key="bar.cls" class="bar" :class="bar.cls">
        <div v-for="(gr, gi) in bar.groups" :key="gi" class="group" :class="[gr.cls, { big: gr.big }]">
          <i class="grip" />
          <template v-for="(t, i) in gr.tools" :key="i">
            <button v-if="t.kind === 'button'" type="button" class="tool" :class="[t.flags, { labelled: t.lines.length }]" :aria-label="t.lines.join('') || t.icon">
              <svg viewBox="0 0 24 24" aria-hidden="true" v-html="icons[t.icon]" />
              <span v-if="t.lines.length" class="cap"><span v-for="l in t.lines" :key="l">{{ l }}</span></span>
            </button>
            <i v-else-if="t.kind === 'sep'" class="sep" />
            <button v-else-if="t.kind === 'arrow'" type="button" class="arrow" aria-label="更多" />
            <button v-else-if="t.kind === 'more'" type="button" class="arrow more" aria-label="工具条选项" />
            <i v-else-if="t.kind === 'space'" class="space" />
            <span v-else class="ends">
              <svg viewBox="0 0 10 8" aria-hidden="true"><path d="M1 1l3 3l-3 3M6 1l3 3l-3 3" fill="none" stroke="#000" stroke-width="1.5" /></svg>
              <button type="button" class="arrow more" aria-label="工具条选项" />
            </span>
          </template>
        </div>
      </div>

      <div class="selbar">
        <span class="combo first"><select v-model="filter" aria-label="选择过滤器"><option>没有选择过滤器</option></select></span>
        <span class="combo second"><select v-model="scope" aria-label="选择范围"><option>整个装配</option></select></span>
        <template v-for="(t, i) in snaps" :key="i">
          <i v-if="t.kind === 'sep'" class="sep" />
          <button v-else type="button" class="snap" :class="t.flags" :aria-label="t.icon"><svg viewBox="0 0 24 24" aria-hidden="true" v-html="icons[t.icon]" /></button>
        </template>
        <i class="space" />
        <button type="button" class="arrow more" aria-label="工具条选项" />
      </div>

      <div class="status">
        <p class="cue" />
        <p class="msg">体<span class="lat"> (0) </span> 已选定</p>
        <i class="cell c1" /><i class="cell c2" />
        <div class="cell icons">
          <svg viewBox="0 0 24 24" aria-hidden="true" v-html="icons.dim" />
          <svg viewBox="0 0 24 24" aria-hidden="true" v-html="icons.screen" />
        </div>
      </div>

      <main class="work">
        <aside class="resource">
          <button v-for="(t, i) in tabs" :key="t" type="button" class="tab" :class="{ active: i === activeTab, gap: i >= 4 && i <= 6 }" :aria-label="tabNames[i]" @click="activeTab = i">
            <svg viewBox="0 0 24 24" aria-hidden="true" v-html="icons[t]" />
          </button>
        </aside>

        <section class="nav">
          <h2><svg viewBox="0 0 24 24" aria-hidden="true" v-html="icons.pin" />部件导航器</h2>
          <div class="tree">
            <div class="thead"><button type="button">名称<b class="up" /></button><i class="stub" /></div>
            <div class="tbody">
              <ul>
                <li class="root">
                  <button type="button" class="exp" aria-label="折叠">−</button><i class="dots" />
                  <svg viewBox="0 0 24 24" aria-hidden="true" v-html="icons.folder" /><span>模型历史记录</span>
                </li>
                <li v-for="f in features" :key="f.n" :class="{ sel: f.n === selected }" @click="selected = f.n">
                  <i class="branch" />
                  <input :id="'f' + f.n" v-model="f.on" type="checkbox">
                  <svg viewBox="0 0 24 24" aria-hidden="true" v-html="icons[f.icon]" />
                  <label :for="'f' + f.n">{{ f.name }}<span class="lat"> ({{ f.n }})</span></label>
                </li>
              </ul>
              <div class="vscroll"><i class="tri t-up" /><i class="thumb" /><i class="space" /><i class="tri t-down" /></div>
            </div>
            <div class="hscroll"><i class="tri t-left" /><i class="thumb"><i /><i /><i /></i><i class="space" /><i class="tri t-right" /></div>
          </div>
          <div class="splitter"><i /><b /><i /></div>
        </section>

        <section class="view">
          <svg viewBox="229 235 957 588" role="img" aria-label="模架装配">
            <defs>
              <linearGradient id="bl" x1="0" y1="0" x2="1" y2="0"><stop offset="0" stop-color="#6890b8" /><stop offset="1" stop-color="#5c84ac" /></linearGradient>
              <linearGradient id="br" x1="0" y1="1" x2="1" y2="0"><stop offset="0" stop-color="#76a4d0" /><stop offset="1" stop-color="#6898c8" /></linearGradient>
              <linearGradient id="gr" x1="0" y1="0" x2="1" y2="0"><stop offset="0" stop-color="#c0c0c0" /><stop offset="1" stop-color="#c8c8c8" /></linearGradient>
              <clipPath id="win"><path d="M514 573L669 662V764L514 674Z" /></clipPath>
              <clipPath id="bore"><ellipse cx="709" cy="379" rx="37" ry="22" /></clipPath>
            </defs>
            <g stroke="#000" stroke-width="1.3" stroke-linejoin="round">
              <path d="M460 644L474 636V500H944V652L958 661L724 796Z" fill="#fff" />
              <path d="M460 644L724 796V815L460 664Z" fill="#ababab" />
              <path d="M724 796L958 661V682L724 815Z" fill="#c6c6c6" />
              <path d="M474 550L514 573V675L474 652Z" fill="#acacac" />
              <path d="M709 685L944 551V652L709 787Z" fill="url(#gr)" />
            </g>
            <g clip-path="url(#win)">
              <path d="M514 573L669 662V764L514 674Z" fill="#fff" />
              <path d="M514 570H530V628L514 635Z" fill="#b8b8b8" stroke="#000" />
              <path d="M515 635L669 721V740L515 654Z" fill="#84909c" stroke="#000" stroke-width="1.3" />
              <path d="M515 654L669 740V762L515 672Z" fill="#a88c94" stroke="#000" stroke-width="1.3" />
              <g fill="#101068" stroke="#000">
                <path d="M530 575V636q21 12 42 0V575Z" />
                <path d="M646 640V704q12 8 26 2V640Z" />
              </g>
              <g fill="none" stroke="#3c3ce4" stroke-width="2.2">
                <path v-for="y in coilsA" :key="y" :d="`M530 ${y}q21 9 41 -1`" />
                <path v-for="y in coilsB" :key="y" :d="`M647 ${y}q12 8 26 3`" />
              </g>
              <path d="M526 632q-3 4 4 5M566 641l6-3" stroke="#2020a0" stroke-width="4" />
              <path d="M657 714l8-4l6 4" stroke="#3030d0" stroke-width="3" fill="none" />
              <path d="M654 713l15 8" stroke="#000" />
            </g>
            <path d="M514 573V675M669 662V764M515 674L669 763" fill="none" stroke="#000" stroke-width="2" />
            <g stroke="#000" stroke-width="1.3" stroke-linejoin="round">
              <path d="M669 662L709 685V787L669 764Z" fill="#a8a8a8" />
              <path d="M474 497L709 630V685L474 550Z" fill="#aa5a5e" />
              <path d="M709 630L944 496V551L709 685Z" fill="#c46468" />
              <path d="M474 404L724 540L709 630L474 497Z" fill="url(#bl)" />
              <path d="M709 540L944 420V496L709 630Z" fill="url(#br)" />
            </g>
            <path d="M474 497L709 630L944 496" fill="none" stroke="#000" stroke-width="2.2" />
            <g stroke="#000" stroke-width="1.5" stroke-linejoin="round">
              <path d="M460 378L724 529V550L460 398Z" fill="#a8a8a8" />
              <path d="M724 529L958 395V415L724 550Z" fill="#bebebe" />
              <path d="M694 242L958 395L724 529L460 378Z" fill="#fff" />
            </g>
            <path d="M713 790l10 5l12-7l-4-2l-8 4l-7-3z" fill="#fff" stroke="#000" />
            <path d="M455 396h3" stroke="#3040d0" stroke-width="2" />

            <g v-for="s in screws" :key="s[0]">
              <ellipse :cx="s[0]" :cy="s[1]" rx="11" ry="7" fill="#000" />
              <ellipse :cx="s[0]" :cy="s[1]" rx="8" ry="4.5" fill="#0a4c14" stroke="#20c838" stroke-width="1.2" />
              <ellipse :cx="s[0]" :cy="s[1]" rx="4.5" ry="3" fill="#0c7c1c" stroke="#000" />
            </g>

            <g stroke="#000" stroke-width="1.5">
              <ellipse cx="591" cy="518" rx="6.5" ry="9.5" fill="#c8ecfc" transform="rotate(-24 591 518)" />
              <ellipse cx="591" cy="591" rx="6.5" ry="9.5" fill="#fcb8b4" transform="rotate(-24 591 591)" />
              <ellipse cx="815" cy="604" rx="3.5" ry="5" fill="#6c6660" transform="rotate(22 815 604)" />
              <ellipse cx="839" cy="590" rx="3.5" ry="5" fill="#6c6660" transform="rotate(22 839 590)" />
            </g>
            <path d="M866 539L939 581M826 562L897 603M787 586L859 628" stroke="#3450e8" stroke-width="1.6" />

            <g stroke="#000" stroke-width="1.8">
              <path d="M660 378v9a50 28 0 0 0 99 0v-9z" fill="#a05020" />
              <ellipse cx="709.5" cy="379" rx="49.5" ry="28.5" fill="#f88848" />
              <ellipse cx="709" cy="379" rx="38" ry="22" fill="#a05428" />
              <g clip-path="url(#bore)">
                <ellipse cx="709" cy="391" rx="36" ry="22" fill="#fff" stroke-dasharray="3 1" />
                <ellipse cx="709" cy="400" rx="17" ry="8" fill="#8888e8" />
                <ellipse cx="709" cy="400" rx="9" ry="4" fill="#5858c0" stroke-width="1" />
              </g>
              <ellipse cx="709" cy="379" rx="38" ry="22" fill="none" />
            </g>
            <ellipse cx="678" cy="361" rx="5" ry="3" /><ellipse cx="740" cy="397" rx="5" ry="3" />

            <g class="csys">
              <path d="M710 450V491" stroke="#3848b8" stroke-width="3" stroke-dasharray="16 2" />
              <path d="M712 493L739 473q7 1 6 8Z" fill="#98d8a8" /><path d="M712 493L742 478l-1 4z" fill="#58986c" />
              <path d="M712 497L748 513l-6 5Z" fill="#e8a8a8" /><path d="M712 497L744 515l-3 2z" fill="#b06868" />
              <text x="714" y="446" fill="#4858e0">ZC</text><text x="735" y="468" fill="#58a070">YC</text><text x="733" y="530" fill="#d03848">XC</text>
            </g>

            <g fill="none" stroke="#f4a048" stroke-width="4" stroke-linejoin="round">
              <path d="M709 406L617 458V495L709 547L802 495V458Z" />
              <path d="M617 458L709 511L802 458" stroke-width="3" />
              <path d="M617 495L709 444L802 495" />
              <path d="M709 406V444M709 511V547" stroke-width="6" />
              <path d="M709 410L621 460M709 410L798 460" stroke-width="2" />
              <ellipse cx="709" cy="443" rx="23" ry="13" /><ellipse cx="709" cy="458" rx="23" ry="13" />
            </g>
            <g fill="#f4a048"><circle cx="665" cy="458" r="3.5" /><circle cx="753" cy="458" r="3.5" /><circle cx="709" cy="484" r="3.5" /></g>

            <g class="triad">
              <path d="M294 745l15 8v18l-15 8l-15-8v-18z" fill="#909898" />
              <path d="M294 745l15 8l-15 9l-15-9z" fill="#b4bcbc" /><path d="M294 762l15-9v18l-15 8z" fill="#7c8484" />
              <path d="M294 762V779M294 762L279 753M294 762L309 753" stroke="#d8dcdc" />
              <path d="M279 769V748" stroke="#3050e8" stroke-width="2" /><path d="M276 751h6l-3-8z" fill="#3050e8" />
              <path d="M279 770L296 780" stroke="#e02828" stroke-width="3" /><path d="M294 776l9 7l-10 0z" fill="#e02828" />
              <circle cx="279" cy="770" r="4" fill="#d0d4d4" />
              <text x="275" y="744" fill="#4060ff">Z</text><text x="303" y="791" fill="#e03030">X</text>
            </g>
          </svg>
        </section>
      </main>

      <div v-for="bar in bottomBars" :key="bar.cls" class="bar" :class="bar.cls">
        <div v-for="(gr, gi) in bar.groups" :key="gi" class="group">
          <i class="grip" />
          <template v-for="(t, i) in gr.tools" :key="i">
            <button v-if="t.kind === 'button'" type="button" class="tool" :class="[t.flags, { labelled: t.lines.length }]" :aria-label="t.lines.join('') || t.icon">
              <svg viewBox="0 0 24 24" aria-hidden="true" v-html="icons[t.icon]" />
              <span v-if="t.lines.length" class="cap"><span v-for="l in t.lines" :key="l">{{ l }}</span></span>
            </button>
            <i v-else-if="t.kind === 'sep'" class="sep" />
            <button v-else type="button" class="arrow" :class="{ more: t.kind === 'more' }" aria-label="更多" />
          </template>
        </div>
      </div>
    </div>
    <footer class="edge"><i class="l" /><b /><i class="r" /></footer>
  </div>
</template>

<style>
html, body { height: 100%; background: #000; }
#app { height: 100%; }
</style>

<style scoped>
.window { min-height: 100vh; display: flex; flex-direction: column; background: #141414; font: 12px/14px "Liberation Sans", "Noto Sans CJK SC", sans-serif; color: #000; box-sizing: border-box; }
.window *, .window *::before, .window *::after { box-sizing: border-box; }
button, select { font: inherit; color: inherit; border: 0; background: none; padding: 0; margin: 0; }
h1, h2, p, ul { margin: 0; padding: 0; }
i, b { font-style: normal; }
svg { display: block; overflow: visible; flex: none; }
.defs { width: 0; height: 0; position: absolute; }
.lat { font-family: "Liberation Mono", monospace; font-size: 11px; white-space: pre; }
.space { flex: 1; }

.title { height: 30px; display: flex; align-items: center; padding: 0 3px 2px 7px; color: #fff; border-radius: 6px 6px 0 0; background: linear-gradient(#18181c 0, #18181c 2px, #77777c 2px, #4e4e53 9px, #1d1d1f 10px, #141414 100%); }
.ic-title { width: 15px; height: 15px; }
.title h1 { margin-left: 5px; flex: 1; font: 400 13px/16px "Open Sans", "Noto Sans CJK SC", sans-serif; white-space: nowrap; }
.brand { font: 800 14px/14px "Open Sans", sans-serif; margin-right: 27px; }
.win-btns { display: flex; gap: 4px; }
.wb { width: 18px; height: 18px; border: 1px solid #8a8a8a; border-radius: 3px; background: linear-gradient(#7a7a7a, #3a3a3a); }
.wb.close { background: linear-gradient(#f09078, #d03818); border-color: #f0b0a0; }

.frame { flex: 1; display: flex; flex-direction: column; margin: 0 4px 0 4px; background: #dcdcdc; }
.menubar { height: 24px; display: flex; align-items: center; gap: 11px; padding-bottom: 2px; background: linear-gradient(90deg, #e2e2e2, #efefef 90%); border-top: 1px solid #f6f6f6; }
.menubar > button { white-space: nowrap; flex: none; display: flex; align-items: center; }
.menubar .grip { margin-right: -10px; }
.menubar .grip, .menubar .ic-menu { flex: none; }
.ic-menu { width: 16px; height: 16px; margin-right: -6px; }
.doc-btns { margin-left: auto; display: flex; gap: 2px; padding-right: 4px; }
.doc-btns button { width: 17px; height: 17px; border: 1px solid #666; border-radius: 4px; background: #fafafa; }

.grip { width: 8px; align-self: stretch; flex: none; margin: 5px 0; background: radial-gradient(circle at 2px 2px, #999 1px, transparent 1px) 3px 0 / 5px 4px repeat-y; }
.bar { display: flex; }
.row-a { height: 34px; background: linear-gradient(90deg, #d8d8d8, #e4e4e4); border-top: 1px solid #c0c0c0; }
.row-b { height: 62px; background: linear-gradient(#dedede, #d2d2d2); border-top: 1px solid #fafafa; }
.row-c { height: 35px; background: #d0d0d0; border-top: 1px solid #fafafa; }
.row-d { height: 35px; background: linear-gradient(#ececec, #dcdcdc); border-top: 1px solid #fff; }
.row-e { height: 34px; background: linear-gradient(#dedede, #cfcfcf); border-top: 1px solid #fafafa; padding-left: 150px; }
.group { display: flex; align-items: center; border-right: 1px solid #b8b8b8; box-shadow: 1px 0 #fafafa; flex: none; }
.group + .group { margin-left: 1px; }
.row-c .far { margin-left: 91px; box-shadow: -1px 0 #fafafa; }
.row-c .near { margin-left: 30px; box-shadow: -1px 0 #fafafa; }
.group.wide { width: 599px; }
.group.rest { flex: 1; border-right: 0; box-shadow: none; }
.tool { width: 31px; height: 30px; display: flex; align-items: center; justify-content: center; flex: none; }
.tool svg { width: 23px; height: 23px; }
.tool.pressed { border: 1px solid #999; border-radius: 3px; background: #f4f4f4; }
.tool.labelled { width: auto; padding: 0 1px 0 4px; gap: 3px; white-space: nowrap; }
.cap { display: flex; flex-direction: column; }
.off { color: #9a9a9a; }
.big { align-items: stretch; }
.big .tool.labelled { width: 60px; height: 100%; padding: 5px 0 0; flex-direction: column; justify-content: flex-start; gap: 5px; line-height: 12px; text-align: center; }
.sep { width: 6px; align-self: stretch; flex: none; background: linear-gradient(90deg, transparent 2px, #b4b4b4 2px, #b4b4b4 3px, #fff 3px, #fff 4px, transparent 4px); margin: 2px 0; }
.arrow { width: 12px; height: 100%; flex: none; display: flex; align-items: center; justify-content: center; }
.arrow::before { content: ""; border: 3px solid transparent; border-top-color: #000; border-bottom: 0; }
.arrow.more { width: 13px; align-items: flex-end; padding-bottom: 7px; }
.ends { width: 13px; display: flex; flex-direction: column; align-items: center; justify-content: space-between; padding-top: 4px; margin-right: 1px; }
.ends svg { width: 9px; height: 8px; }
.ends .arrow { height: 20px; }

.selbar { height: 27px; display: flex; align-items: center; padding: 0 3px 0 5px; background: linear-gradient(#8e8e8e 0, #cacaca 3px, #dcdcdc 100%); }
.combo { height: 17px; display: grid; border: 1px solid #5a6470; border-radius: 3px; background: #fff; }
.combo.first { width: 110px; margin-right: 9px; }
.combo.second { width: 116px; margin-right: 4px; }
.combo select { grid-area: 1 / 1; appearance: none; width: 100%; padding-left: 0; height: 15px; line-height: 14px; outline: 0; }
.combo::after { content: ""; grid-area: 1 / 1; justify-self: end; width: 16px; height: 15px; pointer-events: none; border-left: 1px solid #3070b0; background: linear-gradient(#d4eafc, #70b4ec); border-radius: 0 2px 2px 0; }
.combo::before { content: ""; grid-area: 1 / 1; justify-self: end; align-self: center; z-index: 1; margin-right: 3px; border: 5px solid transparent; border-top: 6px solid #102030; border-bottom: 0; pointer-events: none; }
.snap { width: 23px; height: 22px; flex: none; display: flex; align-items: center; justify-content: center; border-radius: 3px; }
.snap svg { width: 16px; height: 16px; }
.snap.pressed { background: #fff; border: 1px solid #555; }

.status { height: 23px; display: flex; border-top: 1px solid #fff; border-bottom: 1px solid #a8a8a8; background: #dadada; align-items: stretch; }
.status .cue { flex: 542; border-right: 1px solid #fff; }
.status .msg { flex: 541; padding: 3px 0 0 3px; font-weight: 700; white-space: nowrap; }
.cell { border-left: 1px solid #fff; }
.c1 { width: 20px; }
.c2 { width: 36px; }
.cell.icons { width: 42px; display: flex; align-items: center; gap: 6px; padding-left: 2px; }
.cell.icons svg { width: 15px; height: 15px; }

.work { flex: 1; display: flex; min-height: 588px; }
.resource { width: 33px; flex: none; padding: 16px 0 0 5px; background: linear-gradient(90deg, #cccccc, #a4a4a4); border-right: 1px solid #808080; display: flex; flex-direction: column; gap: 2px; }
.tab { height: 40px; margin-left: 1px; border: 1px solid #858585; border-right: 0; border-radius: 4px 0 0 4px; background: linear-gradient(90deg, #e8e8e8, #cfcfcf); display: flex; align-items: center; justify-content: center; }
.tab.active { margin: 0 -1px 0 0; background: #ececec; }
.tab.gap { margin-top: 12px; }
.tab svg { width: 22px; height: 22px; }
.nav { width: 192px; flex: none; background: #ebebeb; border-right: 2px solid #8c8c8c; padding: 0 9px; display: flex; flex-direction: column; }
.nav h2 { height: 30px; font-size: 13px; font-weight: 700; display: flex; align-items: center; gap: 14px; padding-left: 5px; }
.nav h2 svg { width: 11px; height: 11px; }
.tree { flex: 1; min-height: 0; border: 1px solid #6a6a6a; background: #efefef; display: flex; flex-direction: column; }
.thead { height: 17px; display: flex; justify-content: space-between; background: linear-gradient(#f4f4f4, #d0d0d0); border-bottom: 1px solid #a0a0a0; }
.thead button { display: flex; align-items: center; gap: 16px; padding-left: 7px; }
.up { border: 5px solid transparent; border-top: 0; border-bottom: 5px solid #000; }
.stub { width: 17px; background: #a0a0a0; }
.tbody { flex: 1; display: flex; min-height: 0; contain: size; }
.tbody ul { flex: 1; overflow: hidden; list-style: none; background: #fff; }
.tbody li { height: 20px; display: flex; align-items: center; border-bottom: 1px dotted #c4c4c4; padding-left: 30px; white-space: nowrap; }
.tbody li:nth-child(even) { background: #f6f6f6; }
.tbody li svg { width: 16px; height: 16px; margin-right: 1px; }
.branch { width: 9px; height: 20px; border-left: 1px dotted #888; background: radial-gradient(circle, #888 1px, transparent 1px) 0 9px / 3px 2px repeat-x; margin-right: 2px; flex: none; }
li input { appearance: none; width: 12px; height: 12px; margin: 0 2px 0 0; border: 1px solid #000; background: #fff; flex: none; display: grid; place-items: center; }
li input:checked::before { content: ""; width: 10px; height: 9px; background: #10b030; clip-path: polygon(0 45%, 18% 30%, 38% 58%, 82% 0, 100% 12%, 44% 100%, 30% 100%); }
li label { flex: 1; align-self: stretch; padding: 2px 0 0 2px; line-height: 15px; color: #222; }
li.sel label { background: #3a96f4; color: #fff; }
.tbody li.root { padding-left: 5px; background: #fff; }
.exp { width: 9px; height: 9px; border: 1px solid #888; border-radius: 2px; line-height: 7px; font-size: 9px; background: #fff; flex: none; }
.dots { width: 6px; border-top: 1px dotted #888; }
.root span { color: #222; padding-left: 2px; }
.vscroll { width: 18px; background: #ececec; border-left: 1px solid #ddd; display: flex; flex-direction: column; align-items: center; padding: 8px 0; }
.vscroll .thumb { width: 15px; height: 15px; margin-top: 10px; border: 1px solid #a0a0a0; background: linear-gradient(90deg, #f8f8f8, #cfcfcf); }
.tri { border: 3px solid transparent; width: 0; height: 0; }
.t-up { border-top: 0; border-bottom: 4px solid #111; }
.t-down { border-bottom: 0; border-top: 4px solid #333; }
.t-left { border-left: 0; border-right: 4px solid #111; }
.t-right { border-right: 0; border-left: 4px solid #111; }
.hscroll { height: 18px; display: flex; align-items: center; padding: 0 24px 0 6px; background: #ececec; }
.hscroll .thumb { margin-left: 9px; width: 57px; height: 15px; border: 1px solid #999; border-radius: 2px; background: linear-gradient(#fafafa, #c8c8c8); display: flex; gap: 2px; justify-content: center; align-items: center; }
.hscroll .thumb i { width: 1px; height: 7px; background: #555; }
.splitter { height: 17px; display: flex; align-items: center; gap: 5px; padding-bottom: 5px; }
.splitter i { flex: 1; height: 2px; border-top: 1px solid #aaa; background: #fff; }
.splitter b { width: 27px; height: 6px; border: 1px solid #b0b0b0; background: #dcdcdc; }

.view { flex: 1; min-width: 0; background: #000; display: flex; }
.view > svg { width: 100%; height: 100%; overflow: hidden; }
.view text { font: 11px "Liberation Sans", sans-serif; }
.csys text { font-size: 12px; }

.edge { height: 8px; display: flex; background: linear-gradient(#000 1px, #1c1c1c 1px, #0a0a0a); }
.edge .l { flex: 7; }
.edge .r { flex: 3; }
.edge b { width: 39px; margin-top: 1px; border: 2px solid #3890e8; border-bottom: 0; background: #e4f0fc; }
</style>
